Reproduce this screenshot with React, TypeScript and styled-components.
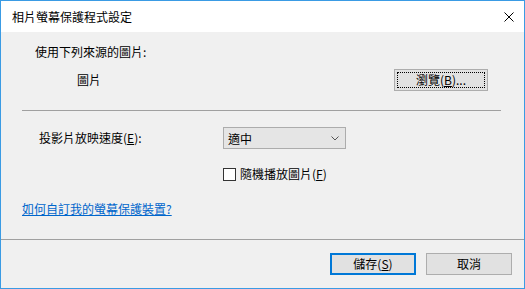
import React from "react";
import styled, { createGlobalStyle } from "styled-components";

const Global = createGlobalStyle`
  html, body { margin: 0; padding: 0; background: #ffffff; }
  * { box-sizing: border-box; }
  body { font-family: "Noto Sans CJK TC", "Noto Sans", sans-serif; font-size: 12px; color: #000; }
`;

const Window = styled.div`
  width: 525px;
  height: 289px;
  border: 1px solid #3a9be4;
  display: flex;
  flex-direction: column;
  background: #f0f0f0;
`;

const TitleBar = styled.div`
  height: 31px;
  background: #ffffff;
  display: flex;
  align-items: center;
  justify-content: space-between;
  padding: 0 9px 0 11px;
  flex: none;
`;

const Title = styled.span`
  font-size: 12px;
  line-height: 16px;
  margin-top: 1px;
`;

const CloseIcon = styled.svg`
  width: 10px;
  height: 10px;
  margin-right: 1px;
`;

const Body = styled.div`
  flex: 1;
  display: flex;
  flex-direction: column;
  padding: 10px 23px 0 21px;
`;

const Row = styled.div<{ $h: number; $mt?: number }>`
  display: flex;
  align-items: center;
  height: ${(p) => p.$h}px;
  margin-top: ${(p) => p.$mt ?? 0}px;
  flex: none;
`;

const Text = styled.span<{ $ml?: number; $w?: number }>`
  margin-left: ${(p) => p.$ml ?? 0}px;
  width: ${(p) => (p.$w ? `${p.$w}px` : "auto")};
  line-height: 16px;
  white-space: nowrap;
`;

const Separator = styled.div<{ $mt: number }>`
  height: 1px;
  background: #a0a0a0;
  margin-top: ${(p) => p.$mt}px;
  flex: none;
`;

const Button = styled.button<{ $w: number; $default?: boolean; $focus?: boolean }>`
  position: relative;
  width: ${(p) => p.$w}px;
  height: 22px;
  background: #e1e1e1;
  border: ${(p) => (p.$default ? "2px solid #0078d7" : "1px solid #adadad")};
  font: inherit;
  font-size: 12px;
  line-height: 16px;
  color: #000;
  padding: 0;
  display: flex;
  align-items: center;
  justify-content: center;
  margin-left: auto;
  ${(p) =>
    p.$focus
      ? `&::after {
    content: "";
    position: absolute;
    inset: 2px;
    border: 1px dotted #000;
  }`
      : ""}
`;

const Combo = styled.div`
  width: 123px;
  height: 22px;
  background: #e5e5e5;
  border: 1px solid #acacac;
  display: flex;
  align-items: center;
  justify-content: space-between;
  padding: 0 6px 0 4px;
`;

const Chevron = styled.svg`
  width: 8px;
  height: 5px;
`;

const CheckRow = styled.label`
  display: flex;
  align-items: center;
  gap: 4px;
`;

const CheckBox = styled.span`
  width: 13px;
  height: 13px;
  border: 1px solid #333333;
  background: #ffffff;
  flex: none;
`;

const Link = styled.a`
  color: #0066cc;
  text-decoration: underline;
  line-height: 16px;
  white-space: nowrap;
`;

const Footer = styled.div`
  height: 49px;
  border-top: 1px solid #a0a0a0;
  display: flex;
  justify-content: flex-end;
  align-items: flex-start;
  gap: 10px;
  padding: 13px 12px 0 0;
  flex: none;
`;

const FooterButton = styled(Button)`
  margin-left: 0;
`;

export default function App() {
  return (
    <>
      <Global />
      <Window>
        <TitleBar>
          <Title>相片螢幕保護程式設定</Title>
          <CloseIcon viewBox="0 0 10 10">
            <path d="M0.5 0.5 L9.5 9.5 M9.5 0.5 L0.5 9.5" stroke="#000" strokeWidth="1" />
          </CloseIcon>
        </TitleBar>
        <Body>
          <Row $h={20}>
            <Text $ml={13}>使用下列來源的圖片:</Text>
          </Row>
          <Row $h={22} $mt={7}>
            <Text $ml={55}>圖片</Text>
            <Button $w={94} $focus style={{ marginRight: 13 }}>
              瀏覽(<u>B</u>)...
            </Button>
          </Row>
          <Separator $mt={19} />
          <Row $h={22} $mt={16}>
            <Text $ml={17} $w={184}>
              投影片放映速度(<u>E</u>):
            </Text>
            <Combo>
              <span>適中</span>
              <Chevron viewBox="0 0 8 5">
                <path d="M0.5 0.5 L4 4 L7.5 0.5" stroke="#555" fill="none" strokeWidth="1" />
              </Chevron>
            </Combo>
          </Row>
          <Row $h={14} $mt={18}>
            <CheckRow style={{ marginLeft: 201 }}>
              <CheckBox />
              <Text>
                隨機播放圖片(<u>F</u>)
              </Text>
            </CheckRow>
          </Row>
          <Row $h={16} $mt={20}>
            <Link href="#">如何自訂我的螢幕保護裝置?</Link>
          </Row>
        </Body>
        <Footer>
          <FooterButton $w={86} $default>
            儲存(<u>S</u>)
          </FooterButton>
          <FooterButton $w={86}>取消</FooterButton>
        </Footer>
      </Window>
    </>
  );
}
